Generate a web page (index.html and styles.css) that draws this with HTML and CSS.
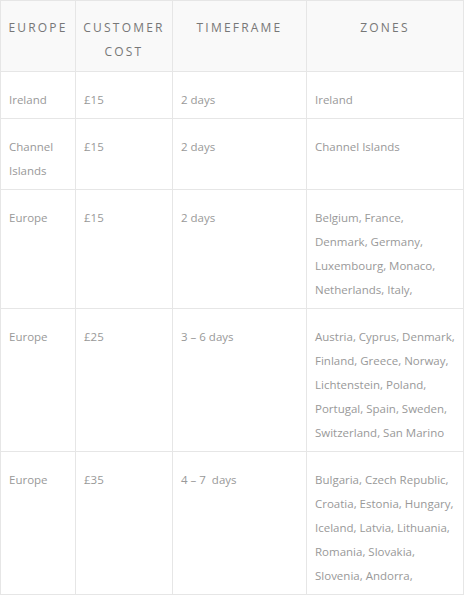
FILE: index.html
```html
<!DOCTYPE html>
<html lang="en">
<head>
<meta charset="utf-8">
<title>Shipping zones</title>
<link rel="stylesheet" href="styles.css">
</head>
<body>
<table class="rates">
  <colgroup>
    <col class="c-region">
    <col class="c-cost">
    <col class="c-time">
    <col class="c-zones">
  </colgroup>
  <thead>
    <tr>
      <th>Europe</th>
      <th>Customer cost</th>
      <th>Timeframe</th>
      <th>Zones</th>
    </tr>
  </thead>
  <tbody>
    <tr>
      <td>Ireland</td>
      <td>£15</td>
      <td>2 days</td>
      <td class="zones">Ireland</td>
    </tr>
    <tr>
      <td>Channel Islands</td>
      <td>£15</td>
      <td>2 days</td>
      <td class="zones">Channel Islands</td>
    </tr>
    <tr>
      <td>Europe</td>
      <td>£15</td>
      <td>2 days</td>
      <td class="zones">Belgium, France, Denmark, Germany, Luxembourg, Monaco, Netherlands, Italy,</td>
    </tr>
    <tr>
      <td>Europe</td>
      <td>£25</td>
      <td>3 – 6 days</td>
      <td class="zones">Austria, Cyprus, Denmark, Finland, Greece, Norway, Lichtenstein, Poland, Portugal, Spain, Sweden, Switzerland, San Marino</td>
    </tr>
    <tr>
      <td>Europe</td>
      <td>£35</td>
      <td>4 – 7&nbsp; days</td>
      <td class="zones">Bulgaria, Czech Republic, Croatia, Estonia, Hungary, Iceland, Latvia, Lithuania, Romania, Slovakia, Slovenia, Andorra,</td>
    </tr>
  </tbody>
</table>
</body>
</html>
```

FILE: styles.css
```css
html, body {
  margin: 0;
  padding: 0;
  background: #ffffff;
}

body {
  font-family: "Open Sans", "Liberation Sans", sans-serif;
}

.rates {
  width: 463px;
  border-collapse: collapse;
  table-layout: fixed;
}

.c-region { width: 75px; }
.c-cost { width: 97px; }
.c-time { width: 134px; }
.c-zones { width: 157px; }

.rates th,
.rates td {
  border: 1px solid #e6e6e6;
  vertical-align: top;
}

.rates th {
  background: #f9f9f9;
  color: #777777;
  font-weight: 400;
  font-size: 12px;
  letter-spacing: 2.2px;
  text-transform: uppercase;
  line-height: 24px;
  padding: 15px 4px 7px;
  text-align: center;
  height: 24px;
}

.rates td {
  color: #999999;
  font-size: 11.5px;
  line-height: 24px;
  padding: 16px 8px 6px;
  text-align: left;
}

.rates td.zones {
  padding-right: 6px;
}
```
